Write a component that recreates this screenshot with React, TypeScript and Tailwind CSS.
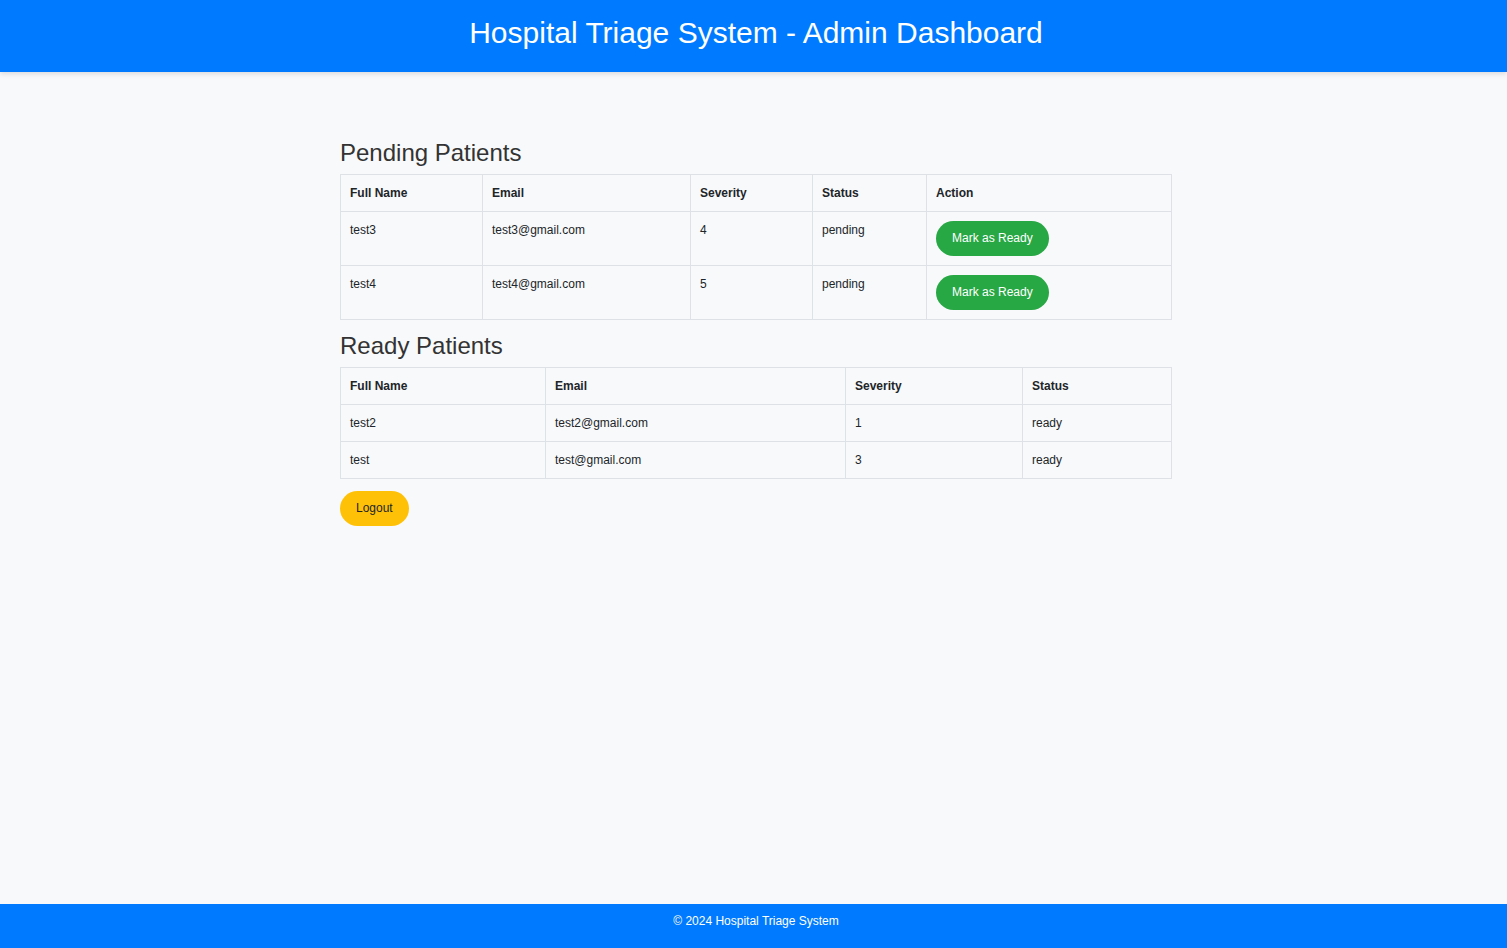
const pending = [
  { name: 'test3', email: 'test3@gmail.com', severity: 4, status: 'pending' },
  { name: 'test4', email: 'test4@gmail.com', severity: 5, status: 'pending' },
]

const ready = [
  { name: 'test2', email: 'test2@gmail.com', severity: 1, status: 'ready' },
  { name: 'test', email: 'test@gmail.com', severity: 3, status: 'ready' },
]

const th = 'border border-[#dee2e6] py-[10px] px-[9px] text-left align-top font-bold leading-[16px]'
const td = 'border border-[#dee2e6] py-[10px] px-[9px] text-left align-top leading-[16px]'

export default function App() {
  return (
    <div className="min-h-screen flex flex-col bg-[#f8f9fa] text-[#212529] font-['Liberation_Sans',Arial,sans-serif]">
      {/* Header */}
      <header className="h-[72px] bg-[#007bff] pt-[16px] pl-[5px] text-center text-white shadow-[0_2px_5px_rgba(0,0,0,0.12)]">
        <h1 className="text-[30px] leading-[34px] font-normal">Hospital Triage System - Admin Dashboard</h1>
      </header>

      <main className="flex-1 pl-[5px]">
        <div className="w-[832px] mx-auto pt-[67px]">
          {/* Pending Patients */}
          <h2 className="text-[24px] leading-[28px] text-[#333] mb-[7px]">Pending Patients</h2>
          <table className="w-full border-collapse text-[12px]">
            <thead>
              <tr>
                <th className={`${th} w-[142px]`}>Full Name</th>
                <th className={`${th} w-[208px]`}>Email</th>
                <th className={`${th} w-[122px]`}>Severity</th>
                <th className={`${th} w-[114px]`}>Status</th>
                <th className={th}>Action</th>
              </tr>
            </thead>
            <tbody>
              {pending.map((p) => (
                <tr key={p.email}>
                  <td className={td}>{p.name}</td>
                  <td className={td}>{p.email}</td>
                  <td className={td}>{p.severity}</td>
                  <td className={td}>{p.status}</td>
                  <td className="border border-[#dee2e6] pt-[9px] pb-[9px] px-[9px] text-left align-top leading-[16px]">
                    <button className="block h-[35px] px-[16px] rounded-full bg-[#28a745] text-white text-[12px] leading-[15px]">
                      Mark as Ready
                    </button>
                  </td>
                </tr>
              ))}
            </tbody>
          </table>

          {/* Ready Patients */}
          <h2 className="text-[24px] leading-[28px] text-[#333] mt-[12px] mb-[7px]">Ready Patients</h2>
          <table className="w-full border-collapse text-[12px]">
            <thead>
              <tr>
                <th className={`${th} w-[205px]`}>Full Name</th>
                <th className={`${th} w-[300px]`}>Email</th>
                <th className={`${th} w-[177px]`}>Severity</th>
                <th className={th}>Status</th>
              </tr>
            </thead>
            <tbody>
              {ready.map((p) => (
                <tr key={p.email}>
                  <td className={td}>{p.name}</td>
                  <td className={td}>{p.email}</td>
                  <td className={td}>{p.severity}</td>
                  <td className={td}>{p.status}</td>
                </tr>
              ))}
            </tbody>
          </table>

          <button className="mt-[12px] h-[35px] px-[16px] rounded-full bg-[#ffc107] text-[#212529] text-[12px] leading-[15px]">
            Logout
          </button>
        </div>
      </main>

      {/* Footer */}
      <footer className="h-[44px] bg-[#007bff] pt-[10px] pl-[5px] text-center text-white text-[12px] leading-[14px]">
        © 2024 Hospital Triage System
      </footer>
    </div>
  )
}
